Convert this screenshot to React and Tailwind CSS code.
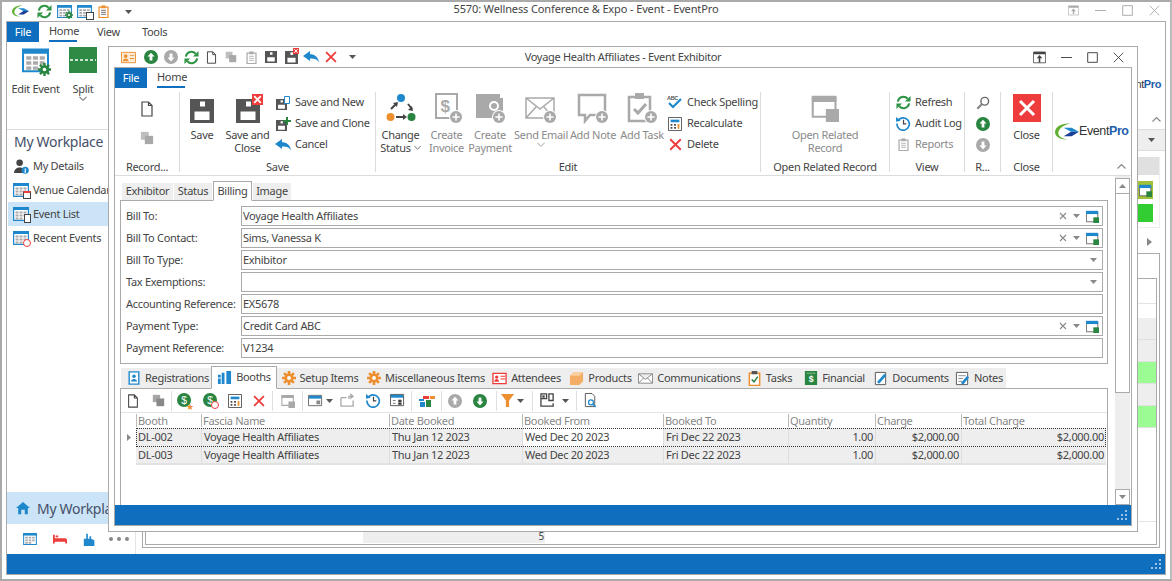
import React from 'react';

const Ic = ({ s = 16, h, v = '0 0 16 16', children }) => (
  <svg width={s} height={h || s} viewBox={v} className="shrink-0">{children}</svg>
);

const Floppy = ({ s = 16, c = '#555' }) => (
  <svg width={s} height={s} viewBox="0 0 24 24" className="shrink-0 block">
    <path fill={c} fillRule="evenodd" d="M0 0h24v24H0zM10 2.500v5h5v-5zM4.500 12.500V21h15v-8.500z" />
  </svg>
);
const SaveX = ({ s = 24 }) => (
  <div className={`relative shrink-0 ${s === 24 ? 'w-[24px] h-[24px]' : 'w-[13px] h-[13px]'}`}>
    <Floppy s={s} />
    <svg viewBox="0 0 8 8" className="absolute -top-[20%] -right-[14%] w-[46%] h-[46%]">
      <path fill="#ee3c3c" d="M0 0h8v8H0z" />
      <path stroke="#fff" strokeWidth="1.300" d="M1.600 1.600l4.800 4.800M6.400 1.600L1.600 6.400" />
    </svg>
  </div>
);
const SaveNew = () => (
  <div className="relative w-[14px] h-[14px] shrink-0">
    <div className="absolute left-0 bottom-0"><Floppy s={11} /></div>
    <svg viewBox="0 0 6 8" className="absolute right-0 top-0 w-[6px] h-[8px]">
      <path fill="#fff" stroke="#1f88cc" d="M.5.5h5v7h-5z" />
    </svg>
  </div>
);
const SaveClone = () => (
  <div className="relative w-[15px] h-[14px] shrink-0">
    <div className="absolute left-0 bottom-0"><Floppy s={11} /></div>
    <svg viewBox="0 0 8 8" className="absolute right-0 top-0 w-[8px] h-[8px]">
      <path fill="#2a8540" d="M3 0h2v3h3v2H5v3H3V5H0V3h3z" />
    </svg>
  </div>
);
const Circle = ({ up, c = '#2a8540', s = 14 }) => (
  <Ic s={s}>
    <circle cx="8" cy="8" r="8" fill={c} />
    <path fill="#fff" d={up ? 'M8 3l4 4.400H9.600V12H6.400V7.400H4z' : 'M8 13l4-4.400H9.600V4H6.400v4.600H4z'} />
  </Ic>
);
const Refresh = ({ s = 15 }) => (
  <Ic s={s}>
    <path fill="none" stroke="#2e9444" strokeWidth="2.200" d="M2 7a6 6 0 0 1 10.400-3M14 9a6 6 0 0 1-10.400 3" />
    <path fill="#2e9444" d="M15.500 1v6h-6zM.5 15V9h6z" />
  </Ic>
);
const Doc = ({ s = 14, c = '#444' }) => (
  <Ic s={s}>
    <path fill="#fff" stroke={c} strokeWidth="1.200" d="M3 1h6.500L13 4.500V15H3zM9.500 1v3.500H13" />
  </Ic>
);
const Copy = ({ s = 14, c = '#a8a8a8' }) => (
  <Ic s={s}>
    <path fill={c} d="M1 1h9v9H1z" opacity=".75" />
    <path fill={c} d="M5.500 5.500H15V15H5.500z" />
  </Ic>
);
const Clip = ({ s = 14, c = '#aaa', line = '#aaa' }) => (
  <Ic s={s}>
    <path fill="#fff" stroke={c} strokeWidth="1.500" d="M2.500 2.500h11v13h-11z" />
    <path fill={c} d="M5.500 .5h5v3.500h-5z" />
    <path stroke={line} strokeWidth="1" d="M5 6.500h6M5 9h6M5 11.500h6" />
  </Ic>
);
const Undo = ({ s = 16 }) => (
  <Ic s={s} h={s - 2} v="0 0 16 14">
    <path fill="#1f88cc" d="M0 6l7-5v3.200c4.500 0 8 2.600 9 8-2-3-4.800-3.800-9-3.600V11z" />
  </Ic>
);
const RedX = ({ s = 13 }) => (
  <Ic s={s}>
    <path stroke="#ee3c3c" strokeWidth="2.400" d="M1.500 1.500l13 13M14.500 1.500l-13 13" />
  </Ic>
);
const Caret = ({ c = '#555' }) => (
  <svg width="7" height="4" viewBox="0 0 7 4" className="shrink-0">
    <path fill={c} d="M0 0h7L3.500 4z" />
  </svg>
);
const Chev = ({ up, c = '#888', w = 9 }) => (
  <svg width={w} height="6" viewBox="0 0 9 6" className="shrink-0">
    <path fill="none" stroke={c} strokeWidth="1.200" d={up ? 'M.5 5.500l4-4 4 4' : 'M.5 .5l4 4 4-4'} />
  </svg>
);
const Cal = ({ s = 16, badge }) => (
  <div className="relative shrink-0">
    <svg width={s} height={s - 2} viewBox="0 0 16 14" className="block">
      <path fill="#fff" stroke="#1f88cc" strokeWidth="1.200" d="M.6.6h14.800v12.800H.6z" />
      <path fill="#1f88cc" d="M0 0h16v3H0z" />
      <path fill="#aaa" d="M2.500 4.500h3v2h-3zM6.500 4.500h3v2h-3zM10.500 4.500h3v2h-3zM2.500 7.500h3v2h-3zM6.500 7.500h3v2h-3zM10.500 7.500h3v2h-3zM2.500 10.500h3v2h-3zM6.500 10.500h3v2h-3z" />
    </svg>
    {badge}
  </div>
);
const Gear = ({ s = 10, c = '#2a8540' }) => (
  <svg width={s} height={s} viewBox="0 0 16 16" className="block shrink-0">
    <path stroke={c} strokeWidth="3" d="M8 0v16M0 8h16M2.400 2.400l11.200 11.200M13.600 2.400L2.400 13.600" />
    <circle cx="8" cy="8" r="5.200" fill={c} />
    <circle cx="8" cy="8" r="2.200" fill="#fff" />
  </svg>
);
const Swoosh = ({ s = 18 }) => (
  <svg width={s} height={s * 0.72} viewBox="0 0 36 26" className="shrink-0">
    <path fill="#5fb030" d="M22 1C10 0 0 6 0 14c0 7 8 11 18 11-9-2-14-6-13-11C6 8 13 3 22 1z" />
    <path fill="#1f88cc" d="M13 7h12l11 6H24z" />
    <path fill="#1b3f94" d="M36 13L24 13l-11 7h12z" />
  </svg>
);
const Plus = ({ children }) => (
  <div className="relative w-[32px] h-[32px] shrink-0">
    {children}
    <svg viewBox="0 0 14 14" className="absolute right-0 bottom-0 w-[14px] h-[14px]">
      <circle cx="7" cy="7" r="7" fill="#fff" />
      <circle cx="7" cy="7" r="6" fill="#a9a9a9" />
      <path stroke="#fff" strokeWidth="1.600" d="M7 3.400v7.200M3.400 7h7.200" />
    </svg>
  </div>
);
const WinGreen = () => (
  <Ic s={13}>
    <path fill="#fff" stroke="#555" d="M.5 2.500h14v12H.5z" />
    <path fill="#1f88cc" d="M0 1h15v4H0z" />
    <path fill="#2a8540" d="M9 9h7v7H9z" />
  </Ic>
);
const WinGray = ({ s = 28 }) => (
  <Ic s={s}>
    <path fill="none" stroke="#a9a9a9" strokeWidth="1.200" d="M1 2h13v11H1z" />
    <path fill="#a9a9a9" d="M.5 1h14v3.500H.5zM8.500 8.500H16V16H8.500z" />
  </Ic>
);
const Calc = ({ s = 14 }) => (
  <Ic s={s}>
    <path fill="#fff" stroke="#444" d="M.5.5h15v15H.5z" />
    <path fill="#1f88cc" d="M3 3h10v3H3z" />
    <path fill="#444" d="M3 8h2v2H3zM7 8h2v2H7zM3 11.500h2v2H3zM7 11.500h2v2H7z" />
    <path fill="#e8912d" d="M11 8h2v5.500h-2z" />
  </Ic>
);
const History = () => (
  <Ic s={15}>
    <path fill="none" stroke="#1f88cc" strokeWidth="1.800" d="M2 5a6.600 6.600 0 1 1-1 3" />
    <path fill="#1f88cc" d="M0 1l5 4-5 1z" />
    <path fill="none" stroke="#444" strokeWidth="1.300" d="M8 4v4.500h3" />
  </Ic>
);
const Dollar = ({ kid }) => (
  <div className="relative w-[16px] h-[16px] shrink-0">
    <svg viewBox="0 0 16 16" className="w-[15px] h-[15px]">
      <circle cx="7.500" cy="7.500" r="7.500" fill="#2a8540" />
      <text x="7.500" y="11.500" fontSize="11" textAnchor="middle" fill="#fff" fontFamily="Liberation Sans, sans-serif">$</text>
    </svg>
    {kid}
  </div>
);

const Lbl = ({ children, off, className = '' }) => (
  <span className={`whitespace-nowrap ${off ? 'text-[#8a8a8a]' : 'text-[#444]'} ${className}`}>{children}</span>
);

const Big = ({ w, icon, top, bot, off, chev, gap = 'mb-[4px]' }) => (
  <div className={`flex flex-col items-center shrink-0 leading-[13px] ${w}`}>
    <div className={`h-[32px] flex items-center justify-center ${gap}`}>{icon}</div>
    <Lbl off={off}>{top}</Lbl>
    {bot && <Lbl off={off} className="flex items-center gap-[3px]">{bot}{chev === 'inline' && <Chev w={7} c="#666" />}</Lbl>}
    {chev === 'below' && <div className="mt-[1px]"><Chev w={8} c={off ? '#bbb' : '#777'} /></div>}
  </div>
);

const Small = ({ icon, label, off }) => (
  <div className="h-[21px] flex items-center gap-[4px]">
    <div className="w-[16px] flex justify-center">{icon}</div>
    <Lbl off={off}>{label}</Lbl>
  </div>
);

const Group = ({ w, label, children, sep = true, inner = '' }) => (
  <div className={`shrink-0 flex flex-col h-full ${w} ${sep ? 'border-r border-[#dcdcdc]' : ''}`}>
    <div className={`flex-1 flex min-h-0 ${inner}`}>{children}</div>
    <div className="h-[14px] -mb-[2px] text-center text-[#444] leading-[14px] whitespace-nowrap">{label}</div>
  </div>
);

const ChildRibbon = () => (
  <div className="h-[88px] border-b border-[#dcdcdc] flex pt-[4px] pb-[3px] shrink-0">
    <Group w="w-[65px]" label="Record...">
      <div className="w-full flex flex-col items-center gap-[14px] pt-[9px]">
        <Doc s={16} />
        <Copy s={14} />
      </div>
    </Group>
    <Group w="w-[196px]" label="Save">
      <Big w="w-[44px]" icon={<div className="pt-[6px]"><Floppy s={24} /></div>} top="Save" />
      <Big w="w-[47px]" icon={<div className="pt-[6px]"><SaveX /></div>} top="Save and" bot="Close" />
      <div className="flex flex-col pl-[4px]">
        <Small icon={<SaveNew />} label="Save and New" />
        <Small icon={<SaveClone />} label="Save and Clone" />
        <Small icon={<Undo />} label="Cancel" />
      </div>
    </Group>
    <Group w="w-[385px]" label="Edit">
      <Big w="w-[49px]" icon={
        <svg width="30" height="30" viewBox="0 0 30 30">
          <circle cx="15" cy="5" r="4" fill="#1f88cc" />
          <circle cx="4.500" cy="24" r="4" fill="#ee8f2f" />
          <circle cx="25.500" cy="24" r="4" fill="#2a8540" />
          <path stroke="#444" strokeWidth="2" fill="#444" d="M5 16l5-5M22 11l4 5M10 24h9" />
          <path fill="#444" d="M12 9l-1 5-4-4zM27 18l-5-1 4-4zM21 24l-4-3v6z" />
        </svg>
      } top="Change" bot="Status" chev="inline" />
      <Big w="w-[43px]" off icon={
        <Plus>
          <svg width="32" height="32" viewBox="0 0 32 32">
            <path fill="#fff" stroke="#a9a9a9" strokeWidth="2" d="M5 2h21v24H5z" />
            <text x="14" y="20" fontSize="17" fontWeight="700" textAnchor="middle" fill="#a9a9a9" fontFamily="Liberation Sans, sans-serif">$</text>
          </svg>
        </Plus>
      } top="Create" bot="Invoice" />
      <Big w="w-[44px]" off icon={
        <Plus>
          <svg width="32" height="32" viewBox="0 0 32 32">
            <path fill="#a9a9a9" d="M2 2h24v4h3v20H2z" />
            <circle cx="20" cy="14" r="4" fill="none" stroke="#fff" strokeWidth="2" />
          </svg>
        </Plus>
      } top="Create" bot="Payment" />
      <Big w="w-[58px]" off chev="below" icon={
        <Plus>
          <svg width="32" height="32" viewBox="0 0 32 32">
            <path fill="#fff" stroke="#a9a9a9" strokeWidth="1.500" d="M1 6h28v20H1zM1 6l14 11L29 6M1 26l10-11M29 26L19 15" />
          </svg>
        </Plus>
      } top="Send Email" />
      <Big w="w-[46px]" off icon={
        <Plus>
          <svg width="32" height="32" viewBox="0 0 32 32">
            <path fill="#fff" stroke="#a9a9a9" strokeWidth="2.500" d="M2 3h26v20H13l-5 6v-6H2z" />
          </svg>
        </Plus>
      } top="Add Note" />
      <Big w="w-[52px]" off icon={
        <Plus>
          <svg width="32" height="32" viewBox="0 0 32 32">
            <path fill="#fff" stroke="#a9a9a9" strokeWidth="2.500" d="M3 5h21v24H3z" />
            <path fill="#a9a9a9" d="M9 1h9v6H9z" />
            <path fill="none" stroke="#a9a9a9" strokeWidth="3" d="M8 17l4 4 8-9" />
          </svg>
        </Plus>
      } top="Add Task" />
      <div className="flex flex-col -ml-[1px]">
        <Small icon={
          <svg width="16" height="15" viewBox="0 0 16 15">
            <text x="0" y="5" fontSize="5.500" fontWeight="700" fill="#555" fontFamily="Liberation Sans, sans-serif">ABC</text>
            <path fill="none" stroke="#1f88cc" strokeWidth="2.200" d="M2 8l4 4 8-8" />
          </svg>
        } label="Check Spelling" />
        <Small icon={<Calc />} label="Recalculate" />
        <Small icon={<RedX />} label="Delete" />
      </div>
    </Group>
    <Group w="w-[129px]" label="Open Related Record">
      <div className="w-full flex justify-center">
        <Big w="w-[90px]" off icon={<WinGray />} top="Open Related" bot="Record" />
      </div>
    </Group>
    <Group w="w-[75px]" label="View" inner="pl-[5px]">
      <div className="flex flex-col">
        <Small icon={<Refresh />} label="Refresh" />
        <Small icon={<History />} label="Audit Log" />
        <Small off icon={<Clip s={13} />} label="Reports" />
      </div>
    </Group>
    <Group w="w-[36px]" label="R...">
      <div className="w-full flex flex-col items-center">
        <div className="h-[21px] flex items-center">
          <Ic s={14}>
            <circle cx="10" cy="6" r="4.400" fill="none" stroke="#666" strokeWidth="1.600" />
            <path stroke="#888" strokeWidth="2.600" d="M6.800 9.200L1.500 14.500" />
          </Ic>
        </div>
        <div className="h-[21px] flex items-center"><Circle up /></div>
        <div className="h-[21px] flex items-center"><Circle c="#a9a9a9" /></div>
      </div>
    </Group>
    <Group w="w-[52px]" label="Close">
      <Big w="w-[51px]" icon={
        <svg width="28" height="28" viewBox="0 0 28 28">
          <path fill="#ee3c3c" d="M0 0h28v28H0z" />
          <path stroke="#fff" strokeWidth="3" d="M7 7l14 14M21 7L7 21" />
        </svg>
      } top="Close" />
    </Group>
    <div className="flex-1 relative">
      <div className="flex items-center pl-[2px] pt-[31px]">
        <Swoosh s={24} />
        <span className="font-['Liberation_Sans',sans-serif] text-[12.500px] tracking-[-0.4px] text-[#333] leading-none">Event<span className="text-[#1f5fa8] font-bold">Pro</span></span>
      </div>
      <div className="absolute right-[5px] bottom-[3px]"><Chev up /></div>
    </div>
  </div>
);

const fields = [
  { label: 'Bill To:', val: 'Voyage Health Affiliates', x: true, win: true },
  { label: 'Bill To Contact:', val: 'Sims, Vanessa K', x: true, win: true },
  { label: 'Bill To Type:', val: 'Exhibitor', drop: true },
  { label: 'Tax Exemptions:', val: '', drop: true },
  { label: 'Accounting Reference:', val: 'EX5678' },
  { label: 'Payment Type:', val: 'Credit Card ABC', x: true, win: true },
  { label: 'Payment Reference:', val: 'V1234' },
];

const Field = ({ f }) => (
  <div className="flex h-[20px] items-center">
    <div className="w-[120px] pl-[5px] shrink-0 text-[#444] whitespace-nowrap">{f.label}</div>
    <div className="flex-1 h-full border border-[#aaa] flex items-center pl-[1px] text-[#444]">
      <span className="flex-1">{f.val}</span>
      {f.win && (
        <div className="flex items-center gap-[6px] pr-[3px]">
          <svg width="8" height="8" viewBox="0 0 8 8"><path stroke="#888" strokeWidth="1.100" d="M1 1l6 6M7 1L1 7" /></svg>
          <Caret c="#888" />
          <WinGreen />
        </div>
      )}
      {f.drop && <div className="pr-[5px]"><Caret c="#888" /></div>}
    </div>
  </div>
);

const FormTabs = () => (
  <div className="flex items-end h-[19px] pl-[2px] gap-[1px] shrink-0">
    <div className="h-[17px] w-[51px] bg-[#eee] flex items-center justify-center text-[#444]">Exhibitor</div>
    <div className="h-[17px] w-[38px] bg-[#eee] flex items-center justify-center text-[#444]">Status</div>
    <div className="h-[20px] w-[39px] -mb-[1px] bg-white border border-[#aaa] border-b-white flex items-center justify-center text-[#444] relative z-10">Billing</div>
    <div className="h-[17px] w-[38px] bg-[#eee] flex items-center justify-center text-[#444]">Image</div>
  </div>
);

const BottomTab = ({ w, icon, label, active }) => (
  <div className={`flex items-center justify-center gap-[4px] text-[#444] whitespace-nowrap shrink-0 ${w} ${active ? 'h-[23px] -mb-[1px] bg-white border border-[#aaa] border-b-white relative z-10' : 'h-[20px] bg-[#eee]'}`}>
    {icon}
    {label}
  </div>
);

const GearOrange = () => <Gear s={14} c="#ee8f2f" />;
const RedCard = () => (
  <Ic s={15}>
    <path fill="#fff" stroke="#ee3c3c" strokeWidth="1.400" d="M1 2.500h14v11H1z" />
    <circle cx="5" cy="6.500" r="1.800" fill="#ee3c3c" />
    <path fill="#ee3c3c" d="M2.500 11.500c0-4 5-4 5 0zM9 5h5v1H9zM9 8h5v1H9z" />
  </Ic>
);

const bottomTabs = [
  { w: 'w-[90px] pl-[4px]', label: 'Registrations', icon: <Ic s={14}><path fill="#fff" stroke="#1f88cc" strokeWidth="1.600" d="M2.500 1h11v14h-11z" /><circle cx="8" cy="6" r="2" fill="#1f88cc" /><path fill="#1f88cc" d="M4.500 12c0-4 7-4 7 0z" /></Ic> },
  { w: 'w-[66px]', label: 'Booths', active: true, icon: <Ic s={15}><path fill="#1f88cc" d="M10 1h5v14h-5zM1 5h3v3H1zM5 3h3v12H5zM1 9h3v6H1z" /></Ic> },
  { w: 'w-[85px] pl-[1px]', label: 'Setup Items', icon: <GearOrange /> },
  { w: 'w-[123px] pl-[5px]', label: 'Miscellaneous Items', icon: <GearOrange /> },
  { w: 'w-[81px] pl-[2px]', label: 'Attendees', icon: <RedCard /> },
  { w: 'w-[71px] pr-[2px]', label: 'Products', icon: <Ic s={15}><path fill="#f4ad65" d="M1 5l4-4h10v10l-4 4H1z" /><path fill="#fbd0a0" d="M1 5l4-4h10l-4 4z" /></Ic> },
  { w: 'w-[105px]', label: 'Communications', icon: <Ic s={15}><path fill="#fff" stroke="#888" d="M.5 3h15v10H.5zM.5 3L8 9l7.500-6M.5 13L6 7.500M15.500 13L10 7.500" /></Ic> },
  { w: 'w-[61px] pr-[6px]', label: 'Tasks', icon: <Ic s={15}><path fill="#fff" stroke="#ee8f2f" strokeWidth="1.600" d="M2.500 2.500h11v13h-11z" /><path fill="#555" d="M5 0h6v3.500H5z" /><path fill="none" stroke="#2a8540" strokeWidth="1.600" d="M5 9l2.500 2.500L11.500 6" /></Ic> },
  { w: 'w-[65px] pr-[2px]', label: 'Financial', icon: <Ic s={14}><path fill="#2a8540" d="M1 0h14v16H1z" /><path fill="#fff" opacity=".5" d="M3 2h10v1H3z" /><text x="8" y="13" fontSize="10" fontWeight="700" textAnchor="middle" fill="#fff" fontFamily="Liberation Sans, sans-serif">$</text></Ic> },
  { w: 'w-[82px] pl-[4px]', label: 'Documents', icon: <Ic s={15}><path fill="#fff" stroke="#555" d="M2.500 1.500h11v13h-11z" /><path fill="#1f88cc" d="M5 11l7-8 2 2-7 8H5z" /></Ic> },
  { w: 'w-[56px] pl-[2px]', label: 'Notes', icon: <Ic s={15}><path fill="#fff" stroke="#555" d="M1.500 1.500h12v13h-12z" /><path stroke="#888" d="M3.500 5h8M3.500 8h5M3.500 11h4" /><path fill="#1f88cc" d="M7 12l6-7 2 2-6 7H7z" /></Ic> },
];

const Sep = () => <div className="w-[1px] h-[20px] bg-[#e0e0e0] shrink-0" />;
const Cell = ({ w, children }) => (
  <div className={`flex items-center justify-center shrink-0 ${w}`}>{children}</div>
);

const BoothToolbar = () => (
  <div className="h-[24px] flex items-center border-b border-[#e4e4e4]">
    <Cell w="w-[24px]"><Doc s={14} /></Cell>
    <Cell w="w-[26px]"><Copy s={13} c="#888" /></Cell>
    <Sep />
    <Cell w="w-[26px]"><Dollar kid={<span className="absolute -right-[1px] -bottom-[2px] text-[9px] leading-none text-[#ee8f2f]">★</span>} /></Cell>
    <Cell w="w-[26px]"><Dollar kid={<div className="absolute right-[0px] bottom-[0px] w-[8px] h-[8px] rounded-full border-[1.500px] border-[#ee3c3c] bg-white" />} /></Cell>
    <Cell w="w-[22px]"><Calc /></Cell>
    <Cell w="w-[26px]"><RedX s={12} /></Cell>
    <Sep />
    <Cell w="w-[29px]"><WinGray s={14} /></Cell>
    <Sep />
    <Cell w="w-[35px]">
      <div className="flex items-center gap-[3px]">
        <Ic s={15}><path fill="#fff" stroke="#666" d="M.5 2.500h14v11H.5z" /><path fill="#1f88cc" d="M1 3h13v3H1z" /><path fill="#888" d="M9 8h4v4H9z" /></Ic>
        <Caret />
      </div>
    </Cell>
    <Cell w="w-[19px]">
      <Ic s={15}><path fill="none" stroke="#aaa" strokeWidth="1.400" d="M1 5h6M1 5v9h13V8" /><path fill="#aaa" d="M11 0l4 3.500-4 3.500z" /><path stroke="#aaa" strokeWidth="1.400" fill="none" d="M12 3.500H9.500v3" /></Ic>
    </Cell>
    <Cell w="w-[32px]"><History /></Cell>
    <Cell w="w-[16px]">
      <Ic s={15}><path fill="#fff" stroke="#555" d="M.5 1.500h14v12H.5z" /><path fill="#1f88cc" d="M1 2h13v3H1z" /><path stroke="#777" d="M3 8h3M3 11h3M9 7.500h3v2H9zM9 10.500h3v2H9z" /></Ic>
    </Cell>
    <Cell w="w-[6px]" />
    <Sep />
    <Cell w="w-[29px]">
      <Ic s={16}><path fill="#1f88cc" d="M0 6h5v2H0zM1 9h5v5H1z" /><path fill="#2a8540" d="M7 7h5v7H7z" /><path fill="#ee3c3c" d="M4 3h6v3H4z" /><path fill="#ee8f2f" d="M11 3h5v3h-5z" /></Ic>
    </Cell>
    <Sep />
    <Cell w="w-[26px]"><Circle up c="#a9a9a9" /></Cell>
    <Cell w="w-[24px]"><Circle /></Cell>
    <Cell w="w-[4px]" />
    <Sep />
    <Cell w="w-[35px]">
      <div className="flex items-center gap-[3px] -ml-[4px]">
        <Ic s={13}><path fill="#ee8f2f" d="M0 0h16L10 8v8H6V8z" /></Ic>
        <Caret />
      </div>
    </Cell>
    <Sep />
    <Cell w="w-[43px]">
      <div className="flex items-center gap-[7px]">
        <Ic s={15}><path fill="none" stroke="#444" strokeWidth="1.400" d="M1 1h6v5H1zM1 6v8h13v-3M9.500 1H14v7H9.500z" /><path fill="#444" d="M2.500 2.500H5V5H2.500z" /></Ic>
        <Caret />
      </div>
    </Cell>
    <Sep />
    <Cell w="w-[27px]">
      <Ic s={15}><path fill="#fff" stroke="#555" d="M2.500.5h7l3 3v11h-10z" /><circle cx="8.500" cy="10" r="2.600" fill="none" stroke="#1f88cc" strokeWidth="1.300" /><path stroke="#1f88cc" strokeWidth="1.600" d="M10.500 12l3 3" /></Ic>
    </Cell>
  </div>
);

const head = ['', 'Booth', 'Fascia Name', 'Date Booked', 'Booked From', 'Booked To', 'Quantity', 'Charge', 'Total Charge'];
const rows = [
  ['DL-002', 'Voyage Health Affiliates', 'Thu Jan 12 2023', 'Wed Dec 20 2023', 'Fri Dec 22 2023', '1.00', '$2,000.00', '$2,000.00'],
  ['DL-003', 'Voyage Health Affiliates', 'Thu Jan 12 2023', 'Wed Dec 20 2023', 'Fri Dec 22 2023', '1.00', '$2,000.00', '$2,000.00'],
];

const Grid = () => (
  <div>
    <div className="grid grid-cols-[15px_65px_188px_133px_141px_125px_87px_86px_146px] h-[15px] items-center">
      {head.map((h, i) => (
        <div key={i} className={`h-[13px] leading-[13px] text-[#888] pl-[1px] whitespace-nowrap ${i > 0 ? 'border-l border-[#bbb]' : ''}`}>{h}</div>
      ))}
    </div>
    {rows.map((r, ri) => (
      <div key={ri} className="flex">
        <div className="w-[15px] shrink-0 bg-white flex items-center justify-center">
          {ri === 0 && <svg width="4" height="7" viewBox="0 0 4 7"><path fill="#888" d="M0 0l4 3.500L0 7z" /></svg>}
        </div>
        <div className={`relative grid grid-cols-[65px_188px_133px_141px_125px_87px_86px_145px] w-[970px] ${ri === 0 ? 'h-[19px]' : 'h-[18px] border-b-2 border-[#e2e2e2]'}`}>
          {r.map((c, i) => (
            <div
              key={i}
              className={`px-[2px] whitespace-nowrap overflow-hidden text-[#444] ${ri === 0 ? 'leading-[18px]' : 'leading-[16px]'} ${i > 0 ? 'border-l border-[#dedede]' : ''} ${i >= 5 ? 'text-right' : ''} ${ri === 0 && i === 3 ? 'bg-white' : 'bg-[#eee]'}`}
            >
              {c}
            </div>
          ))}
          {ri === 0 && <div className="absolute inset-0 border border-dotted border-[#333]" />}
        </div>
      </div>
    ))}
  </div>
);

const Scrollbar = () => (
  <div className="w-[15px] ml-[7px] mr-[1px] bg-[#eee] flex flex-col shrink-0 h-full pt-[2px]">
    <div className="h-[16px] bg-white border border-[#aaa] flex items-center justify-center"><svg width="7" height="4" viewBox="0 0 7 4"><path fill="#888" d="M3.500 0L7 4H0z" /></svg></div>
    <div className="h-[199px] bg-white border border-[#aaa] border-t-0" />
    <div className="flex-1" />
    <div className="h-[16px] bg-white border border-[#aaa] flex items-center justify-center"><Caret c="#888" /></div>
  </div>
);

const Grip = () => (
  <svg width="11" height="11" viewBox="0 0 11 11">
    <path fill="#9cc4e6" d="M8 0h2v2H8zM4 4h2v2H4zM8 4h2v2H8zM0 8h2v2H0zM4 8h2v2H4zM8 8h2v2H8z" />
  </svg>
);

const ChildWindow = () => (
  <div className="absolute left-[108px] top-[46px] w-[1030px] h-[486px] bg-white border border-[#aaa] flex flex-col z-20">
    <div className="h-[20px] relative flex items-center pl-[9px] shrink-0">
      <Cell w="w-[20px]">
        <Ic s={15}><path fill="#fdebd8" stroke="#ee8f2f" d="M.5 2.500h15v11H.5z" /><circle cx="5" cy="6.500" r="2" fill="#ee8f2f" /><path fill="#ee8f2f" d="M2 12c0-4 6-4 6 0zM9.500 5.500H14v1H9.500zM9.500 8.500H14v1H9.500z" /></Ic>
      </Cell>
      <Cell w="w-[3px]" />
      <Cell w="w-[20px]"><Circle up /></Cell>
      <Cell w="w-[20px]"><Circle c="#a9a9a9" /></Cell>
      <Cell w="w-[20px]"><Refresh /></Cell>
      <Cell w="w-[20px]"><Doc s={13} /></Cell>
      <Cell w="w-[20px]"><Copy s={12} /></Cell>
      <Cell w="w-[20px]"><Clip s={13} /></Cell>
      <Cell w="w-[20px]"><Floppy s={12} /></Cell>
      <Cell w="w-[20px]"><SaveX s={13} /></Cell>
      <Cell w="w-[20px]"><Undo s={16} /></Cell>
      <Cell w="w-[20px]"><RedX s={12} /></Cell>
      <Cell w="w-[23px]"><Caret /></Cell>
      <div className="absolute left-0 right-0 top-[3px] text-center text-[#444] leading-[14px] pointer-events-none">Voyage Health Affiliates - Event Exhibitor</div>
      <div className="absolute right-[13px] top-[4px] flex items-center gap-[15px]">
        <Ic s={13}><path fill="none" stroke="#444" d="M.5 1.500h15v13H.5z" /><path fill="#444" d="M1 1h14v3H1zM8 5l3.500 4H9v5H7V9H4.500z" /></Ic>
        <Ic s={11}><path stroke="#444" d="M0 8h16" strokeWidth="1.400" /></Ic>
        <Ic s={11}><path fill="none" stroke="#444" strokeWidth="1.400" d="M1 1h14v14H1z" /></Ic>
        <Ic s={11}><path stroke="#444" strokeWidth="1.300" d="M1 1l14 14M15 1L1 15" /></Ic>
      </div>
    </div>
    <div className="flex-1 mx-[5px] mb-[5px] border border-[#aaa] flex flex-col min-h-0">
      <div className="h-[20px] flex shrink-0">
        <div className="w-[32px] bg-[#106ebe] text-white flex items-center justify-center">File</div>
        <div className="ml-[10px] w-[28px] h-[20px] text-[#444] text-center leading-[17px] border-b-2 border-[#106ebe]">Home</div>
      </div>
      <ChildRibbon />
      <div className="h-[329px] flex shrink-0">
        <div className="w-[988px] ml-[5px] shrink-0 flex flex-col pt-[5px]">
          <FormTabs />
          <div className="h-[164px] border border-[#aaa] pt-[5px] pr-[4px] flex flex-col gap-[2px] shrink-0">
            {fields.map((f) => <Field key={f.label} f={f} />)}
          </div>
          <div className="h-[24px] flex items-end pl-[1px] shrink-0">
            {bottomTabs.map((t) => <BottomTab key={t.label} {...t} />)}
          </div>
          <div className="flex-1 border border-b-0 border-[#aaa] min-h-0 overflow-hidden">
            <BoothToolbar />
            <Grid />
          </div>
        </div>
        <Scrollbar />
      </div>
      <div className="h-[20px] bg-[#106ebe] flex items-center justify-end pr-[3px] shrink-0">
        <Grip />
      </div>
    </div>
  </div>
);

const SideItem = ({ icon, label, sel }) => (
  <div className={`h-[24px] ml-[1px] flex items-center pl-[5px] gap-[4px] whitespace-nowrap text-[#444] ${sel ? 'bg-[#cce4f7]' : ''}`}>
    <div className="w-[16px] flex justify-center">{icon}</div>
    {label}
  </div>
);

const Sidebar = () => (
  <div className="w-[129px] shrink-0 flex flex-col border-r border-[#e4e4e4] overflow-hidden">
    <div className="pl-[7px] pt-[2px] h-[24px] text-[14px] tracking-[-0.3px] leading-[20px] text-[#44506a] whitespace-nowrap">My Workplace</div>
    <SideItem label="My Details" icon={
      <Ic s={15}><circle cx="6" cy="4" r="3.500" fill="#444" /><path fill="#444" d="M0 15c0-8 12-8 12 0z" /><circle cx="12" cy="12" r="3.800" fill="#1f88cc" /><path stroke="#fff" d="M12 10v5" strokeWidth="1.200" /></Ic>
    } />
    <SideItem label="Venue Calendar" icon={<Cal badge={<div className="absolute -right-[2px] -bottom-[2px] w-[8px] h-[8px] bg-white border border-[#444] border-t-2 border-t-[#ee3c3c]" />} />} />
    <SideItem sel label="Event List" icon={<Cal badge={<div className="absolute -right-[2px] -bottom-[2px] w-[7px] h-[9px] bg-white border border-[#444]" />} />} />
    <SideItem label="Recent Events" icon={<Cal badge={<div className="absolute -right-[2px] -bottom-[2px] w-[8px] h-[8px] rounded-full bg-white border border-[#ee3c3c]" />} />} />
    <div className="flex-1" />
    <div className="h-[32px] bg-[#cce4f7] flex items-center pl-[9px] gap-[7px] text-[14px] tracking-[-0.3px] text-[#44506a] whitespace-nowrap">
      <Ic s={14}><path fill="#1f88cc" d="M8 1l8 7h-2.500v7H10v-5H6v5H2.500V8H0z" /></Ic>
      My Workplace
    </div>
    <div className="h-[30px] flex items-center pl-[16px]">
      <Cell w="w-[14px]"><Cal s={14} /></Cell>
      <Cell w="w-[16px]" />
      <Cell w="w-[14px]">
        <Ic s={14}><path fill="#ee3c3c" d="M0 3h2v4h12a2 2 0 0 1 2 2v4h-2v-2H2v2H0zM3 4h3v2H3z" /></Ic>
      </Cell>
      <Cell w="w-[16px]" />
      <Cell w="w-[13px]">
        <Ic s={13}><path fill="#1f88cc" d="M1 16V7h3V1h2v6h2V4h2v3l4 2v7z" /></Ic>
      </Cell>
      <div className="ml-[13px] flex gap-[4px]">
        <span className="w-[4px] h-[4px] rounded-full bg-[#888]" />
        <span className="w-[4px] h-[4px] rounded-full bg-[#888]" />
        <span className="w-[4px] h-[4px] rounded-full bg-[#888]" />
      </div>
    </div>
  </div>
);

const RightPane = () => (
  <div className="flex-1 relative min-w-0">
    <div className="absolute left-[6px] top-[123px] right-[5px] bottom-[6px] border border-[#aaa]" />
    <div className="absolute left-[9px] top-[148px] right-[8px] bottom-[9px] border border-[#aaa]">
      <div className="absolute right-0 top-0 w-[19px]">
        <div className="h-[25px] border-b border-[#e4e4e4]" />
        <div className="h-[14px]" />
        <div className="h-[22px] bg-[#eee] border-b border-[#e0e0e0]" />
        <div className="h-[22px] bg-[#eee] border-b border-[#e0e0e0]" />
        <div className="h-[22px] bg-[#9cfc94] border-b border-[#e0e0e0]" />
        <div className="h-[22px] bg-[#eee] border-b border-[#e0e0e0]" />
        <div className="h-[22px] bg-[#9cfc94] border-b border-[#e0e0e0]" />
        <div className="h-[94px] border-b border-[#e4e4e4]" />
      </div>
    </div>
    <div className="absolute left-[227px] top-[401px] w-[182px] h-[12px] bg-[#eee] text-right pr-[1px] text-[#444] leading-[11px] text-[10px]">5</div>
    <div className="absolute right-0 top-0 w-[28px] h-[21px] bg-[#eee] border-b border-[#ddd] flex items-center justify-center"><Caret /></div>
    <div className="absolute right-[5px] top-[27px] w-[23px] h-[71px] border-r border-b border-[#eee] bg-white">
      <div className="h-[18px] bg-[#e0e0e0]" />
      <div className="mt-[6px] w-[16px] h-[18px] bg-[#9fc038] flex items-center justify-center"><WinGreen /></div>
      <div className="mt-[5px] w-[16px] h-[18px] bg-[#32cd32]" />
    </div>
    <div className="absolute right-[13px] top-[108px]"><svg width="5" height="8" viewBox="0 0 5 8" className="block"><path fill="#888" d="M0 0l5 4-5 4z" /></svg></div>
  </div>
);

const MainWindow = () => (
  <div className="absolute inset-0 border-2 border-[#aaa] border-r-[#bbb]">
    <div className="h-[19px] relative flex items-center pl-[10px]">
      <Swoosh s={17} />
      <div className="w-[8px]" />
      <Refresh s={15} />
      <div className="w-[5px]" />
      <Cal s={15} badge={<div className="absolute -right-[1px] -bottom-[1px]"><Gear s={8} /></div>} />
      <div className="w-[5px]" />
      <Cal s={15} badge={<div className="absolute -right-[2px] -bottom-[2px] w-[8px] h-[8px] bg-white border border-[#444]" />} />
      <div className="w-[5px]" />
      <Clip s={13} c="#ee8f2f" line="#555" />
      <div className="w-[15px]" />
      <Caret />
      <div className="absolute left-0 right-0 top-0 text-center text-[#444] leading-[14px] tracking-[-0.12px]">5570: Wellness Conference &amp; Expo - Event - EventPro</div>
      <div className="absolute right-[10px] top-[3px] flex items-center gap-[16px]">
        <Ic s={11}><path fill="none" stroke="#aaa" d="M.5 1.500h15v13H.5z" /><path fill="#aaa" d="M1 1h14v3H1zM8 5l3.500 4H9v4H7V9H4.500z" /></Ic>
        <Ic s={11}><path stroke="#aaa" strokeWidth="1.400" d="M0 8h16" /></Ic>
        <Ic s={11}><path fill="none" stroke="#aaa" strokeWidth="1.400" d="M1 1h14v14H1z" /></Ic>
        <Ic s={11}><path stroke="#aaa" strokeWidth="1.300" d="M1 1l14 14M15 1L1 15" /></Ic>
      </div>
    </div>
    <div className="absolute left-[4px] right-[4px] top-[19px] bottom-[4px] border border-[#aaa] flex flex-col">
      <div className="h-[20px] flex items-center shrink-0">
        <div className="w-[32px] h-full bg-[#106ebe] text-white flex items-center justify-center">File</div>
        <div className="ml-[10px] w-[28px] h-full text-[#444] text-center leading-[17px] border-b-2 border-[#106ebe]">Home</div>
        <div className="ml-[20px] text-[#444]">View</div>
        <div className="ml-[22px] text-[#444]">Tools</div>
      </div>
      <div className="h-[88px] border-b border-[#dcdcdc] flex shrink-0 relative">
        <div className="pt-[2px] flex">
          <Big w="w-[57px]" gap="mb-[6px]" icon={<Cal s={27} badge={<div className="absolute -right-[2px] -bottom-[3px]"><Gear s={13} /></div>} />} top="Edit Event" />
          <Big w="w-[38px]" gap="mb-[6px]" chev="below" icon={
            <svg width="28" height="26" viewBox="0 0 28 26"><path fill="#2e8b45" d="M0 0h28v26H0z" /><path stroke="#fff" strokeWidth="1.500" strokeDasharray="3 2" d="M1 13h26" /></svg>
          } top="Split" />
        </div>
        <div className="absolute right-[4px] top-[37px] text-[11px] font-['Liberation_Sans',sans-serif] leading-none text-[#333] tracking-[-0.4px]">Event<span className="text-[#1f5fa8] font-bold">Pro</span></div>
        <div className="absolute right-[4px] top-[74px]"><Chev up /></div>
      </div>
      <div className="flex-1 flex min-h-0">
        <Sidebar />
        <RightPane />
      </div>
      <div className="h-[20px] bg-[#106ebe] flex items-center justify-end pr-[3px] shrink-0"><Grip /></div>
    </div>
  </div>
);

export default function App() {
  return (
    <div className="relative w-[1172px] h-[581px] bg-white overflow-hidden font-['Noto_Sans',sans-serif] text-[11px] tracking-[-0.3px]">
      <MainWindow />
      <ChildWindow />
    </div>
  );
}
